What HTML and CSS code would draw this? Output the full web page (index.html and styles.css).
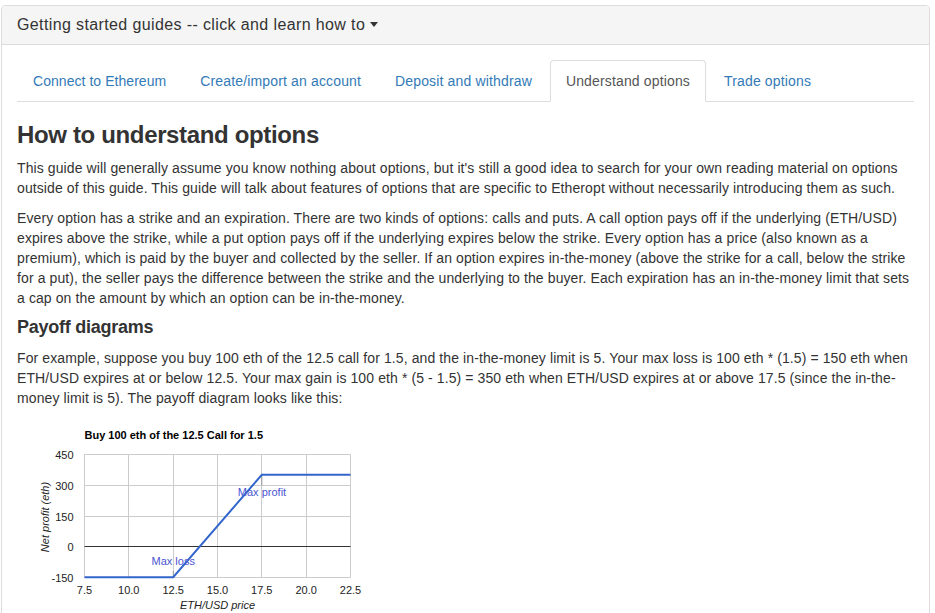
FILE: index.html
```html
<!DOCTYPE html>
<html>
<head>
<meta charset="utf-8">
<title>Getting started guides</title>
<link rel="stylesheet" href="styles.css">
</head>
<body>
<div class="panel">
  <div class="panel-heading">
    <h3 class="panel-title">Getting started guides -- click and learn how to <span class="caret"></span></h3>
  </div>
  <div class="panel-body">
    <ul class="nav-tabs">
      <li class="tab tab-1"><a href="#">Connect to Ethereum</a></li>
      <li class="tab tab-2"><a href="#">Create/import an account</a></li>
      <li class="tab tab-3"><a href="#">Deposit and withdraw</a></li>
      <li class="tab tab-4 active"><a href="#">Understand options</a></li>
      <li class="tab tab-5"><a href="#">Trade options</a></li>
    </ul>
    <div class="tab-content">
      <h3 class="title">How to understand options</h3>
      <p>This guide will generally assume you know nothing about options, but it's still a good idea to search for your own reading material on options<br>outside of this guide. This guide will talk about features of options that are specific to Etheropt without necessarily introducing them as such.</p>
      <p>Every option has a strike and an expiration. There are two kinds of options: calls and puts. A call option pays off if the underlying (ETH/USD)<br>expires above the strike, while a put option pays off if the underlying expires below the strike. Every option has a price (also known as a<br>premium), which is paid by the buyer and collected by the seller. If an option expires in-the-money (above the strike for a call, below the strike<br>for a put), the seller pays the difference between the strike and the underlying to the buyer. Each expiration has an in-the-money limit that sets<br>a cap on the amount by which an option can be in-the-money.</p>
      <h4 class="subtitle">Payoff diagrams</h4>
      <p>For example, suppose you buy 100 eth of the 12.5 call for 1.5, and the in-the-money limit is 5. Your max loss is 100 eth * (1.5) = 150 eth when<br>ETH/USD expires at or below 12.5. Your max gain is 100 eth * (5 - 1.5) = 350 eth when ETH/USD expires at or above 17.5 (since the in-the-<br>money limit is 5). The payoff diagram looks like this:</p>
      <div class="chart">
        <svg class="chart-svg" width="360" height="200" viewBox="0 2 360 200">
          <text class="c-title" x="67.5" y="23">Buy 100 eth of the 12.5 Call for 1.5</text>
          <g class="grid">
            <line x1="67.5" y1="38.5" x2="333.5" y2="38.5"/>
            <line x1="67.5" y1="69.5" x2="333.5" y2="69.5"/>
            <line x1="67.5" y1="100.5" x2="333.5" y2="100.5"/>
            <line x1="67.5" y1="161.5" x2="333.5" y2="161.5"/>
            <line x1="67.5" y1="38.5" x2="67.5" y2="161.5"/>
            <line x1="111.5" y1="38.5" x2="111.5" y2="161.5"/>
            <line x1="156.5" y1="38.5" x2="156.5" y2="161.5"/>
            <line x1="200.5" y1="38.5" x2="200.5" y2="161.5"/>
            <line x1="244.5" y1="38.5" x2="244.5" y2="161.5"/>
            <line x1="289.5" y1="38.5" x2="289.5" y2="161.5"/>
            <line x1="333.5" y1="38.5" x2="333.5" y2="161.5"/>
          </g>
          <line class="zero" x1="67.5" y1="130.5" x2="333.5" y2="130.5"/>
          <line class="stem" x1="156.3" y1="161" x2="156.3" y2="155"/>
          <line class="stem" x1="244.8" y1="59" x2="244.8" y2="69.5"/>
          <path class="series" d="M67.5,161.25 L156.2,161.25 L244.8,58.75 L333.5,58.75"/>
          <g class="ylab">
            <text x="56.5" y="42.5">450</text>
            <text x="56.5" y="73.5">300</text>
            <text x="56.5" y="104.5">150</text>
            <text x="56.5" y="134.5">0</text>
            <text x="56.5" y="165.5">-150</text>
          </g>
          <g class="xlab">
            <text x="67.5" y="177.5">7.5</text>
            <text x="111.8" y="177.5">10.0</text>
            <text x="156.2" y="177.5">12.5</text>
            <text x="200.5" y="177.5">15.0</text>
            <text x="244.8" y="177.5">17.5</text>
            <text x="289.2" y="177.5">20.0</text>
            <text x="333.5" y="177.5">22.5</text>
          </g>
          <text class="axis-title" x="200.5" y="193">ETH/USD price</text>
          <text class="axis-title" transform="translate(32,101) rotate(-90)" x="0" y="0">Net profit (eth)</text>
          <text class="annot" x="156.2" y="148.5">Max loss</text>
          <text class="annot" x="245" y="80">Max profit</text>
        </svg>
      </div>
    </div>
  </div>
</div>
</body>
</html>
```
FILE: styles.css
```css
* { box-sizing: border-box; }

html, body {
  margin: 0;
  padding: 0;
  background: #fff;
}

body {
  font-family: "Liberation Sans", Arial, Helvetica, sans-serif;
  font-size: 14px;
  line-height: 20px;
  color: #333;
  overflow: hidden;
}

.panel {
  margin: 5px 5px 0 1px;
  border: 1px solid #ddd;
  border-radius: 4px;
  background: #fff;
  min-height: 700px;
}

.panel-heading {
  background: #f5f5f5;
  border-bottom: 1px solid #ddd;
  border-radius: 3px 3px 0 0;
  padding: 10px 15px;
}

.panel-title {
  margin: 0;
  font-size: 16px;
  line-height: 17.6px;
  font-weight: normal;
  color: #333;
  letter-spacing: 0.38px;
}

.caret {
  display: inline-block;
  width: 0;
  height: 0;
  margin-left: 0;
  vertical-align: middle;
  border-top: 5px solid #333;
  border-left: 4px solid transparent;
  border-right: 4px solid transparent;
  position: relative;
  top: -1px;
}

.panel-body {
  padding: 15px;
}

.nav-tabs {
  list-style: none;
  margin: 0;
  padding: 0;
  display: flex;
  border-bottom: 1px solid #ddd;
}

.tab {
  margin-bottom: -1px;
}

.tab a {
  display: block;
  padding: 10px 15px;
  margin-right: 2px;
  line-height: 20px;
  border: 1px solid transparent;
  border-radius: 4px 4px 0 0;
  color: #337ab7;
  text-decoration: none;
  letter-spacing: 0.15px;
}

.tab-1 a {
  letter-spacing: 0.05px;
}

.tab.active a {
  color: #555;
  background: #fff;
  border-color: #ddd;
  border-bottom-color: transparent;
}

.tab-content p {
  margin: 0 0 10px;
  white-space: nowrap;
  letter-spacing: 0.1px;
}

.title {
  font-size: 24px;
  line-height: 26.4px;
  font-weight: bold;
  margin: 20px 0 10px;
  color: #333;
  letter-spacing: -0.35px;
}

.subtitle {
  font-size: 18px;
  line-height: 19.8px;
  font-weight: bold;
  margin: 10px 0 10px;
  color: #333;
  letter-spacing: -0.25px;
}

.chart-svg {
  display: block;
  font-family: "Liberation Sans", Arial, sans-serif;
}

.c-title {
  font-size: 11px;
  font-weight: bold;
  fill: #000;
}

.grid line {
  stroke: #ccc;
  stroke-width: 1;
}

.zero {
  stroke: #333;
  stroke-width: 1;
}

.stem {
  stroke: #999;
  stroke-width: 1;
}

.series {
  fill: none;
  stroke: #3366cc;
  stroke-width: 2;
}

.ylab text {
  font-size: 11px;
  fill: #222;
  text-anchor: end;
}

.xlab text {
  font-size: 11px;
  fill: #222;
  text-anchor: middle;
}

.axis-title {
  font-size: 11px;
  font-style: italic;
  fill: #222;
  text-anchor: middle;
}

.annot {
  font-size: 11px;
  fill: #4b55d0;
  text-anchor: middle;
}
```
